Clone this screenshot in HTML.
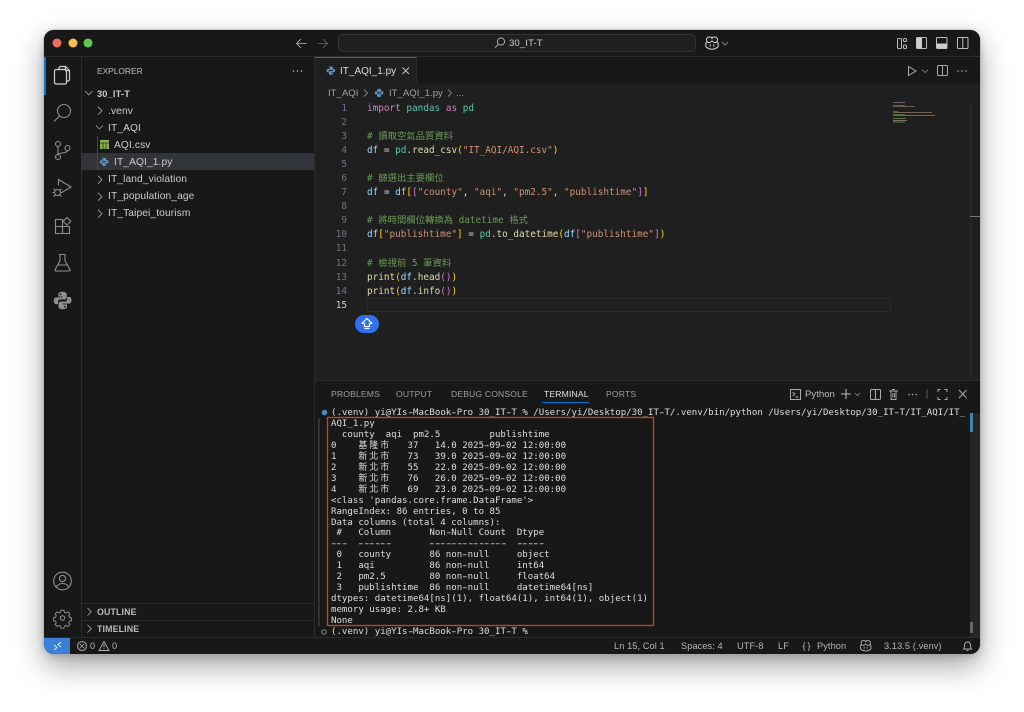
<!DOCTYPE html>
<html lang="zh-Hant">
<head>
<meta charset="utf-8">
<title>30_IT-T</title>
<style>
html,body{margin:0;padding:0;width:1024px;height:712px;overflow:hidden;background:#fff}
*{box-sizing:border-box}
#win{position:absolute;left:44px;top:30px;width:936px;height:624px;border-radius:10px;background:#181818;box-shadow:0 0 0 .5px #aaa,0 12px 30px rgba(0,0,0,.36),0 2px 8px rgba(0,0,0,.18)}
#clip{position:absolute;left:0;top:0;width:1024px;height:712px;clip-path:inset(30px 44px 58px 44px round 10px);filter:blur(.35px)}
.r{position:absolute}
.t{position:absolute;white-space:pre;font-family:"Liberation Sans","Noto Sans CJK TC",sans-serif;color:#ccc;font-size:10px;line-height:14px}
.side{color:#cccccc;font-size:10.2px;letter-spacing:.12px}
.tab{color:#9d9d9d;font-size:8.6px;letter-spacing:.15px}
.st{color:#b5b5b5;font-size:9.2px;letter-spacing:.1px;line-height:14px}
.code{position:absolute;left:367px;top:102px;margin:0;font-family:"DejaVu Sans Mono","Noto Sans CJK TC",monospace;font-size:9.35px;line-height:14.05px;color:#d4d4d4;white-space:pre}
.nums{position:absolute;left:315px;width:32px;top:102px;margin:0;text-align:right;font-family:"DejaVu Sans Mono",monospace;font-size:9.35px;line-height:14.05px;color:#6e7681;white-space:pre}
.k{color:#c586c0}.m{color:#4ec9b0}.c{color:#6a9955}.v{color:#9cdcfe}.s{color:#ce9178}.f{color:#dcdcaa}.y{color:#ffd700}.p{color:#da70d6}
#term{position:absolute;left:331px;top:408px;margin:0;font-family:"DejaVu Sans Mono","Noto Sans CJK TC",monospace;font-size:9.08px;line-height:10.95px;color:#dedede;white-space:pre}
#term b{font-weight:400;font-size:9px;letter-spacing:1.94px;line-height:1px;font-family:"Noto Sans CJK TC",sans-serif}
#term i{font-style:normal;display:inline-block;transform:scaleX(1.6)}
svg{position:absolute;left:0;top:0}
</style>
</head>
<body>
<div id="win"></div>
<div id="clip">
  <!-- base regions -->
  <div class="r" style="left:44px;top:30px;width:936px;height:624px;background:#181818"></div>
  <div class="r" style="left:44px;top:56px;width:936px;height:1px;background:#2b2b2b"></div>
  <div class="r" style="left:81px;top:57px;width:1px;height:581px;background:#2b2b2b"></div>
  <div class="r" style="left:44px;top:57px;width:2px;height:38px;background:#0078d4"></div>
  <div class="r" style="left:315px;top:57px;width:665px;height:323px;background:#1f1f1f"></div>
  <div class="r" style="left:315px;top:57px;width:665px;height:26px;background:#181818"></div>
  <div class="r" style="left:315px;top:57px;width:102px;height:26px;background:#1f1f1f;border-top:1px solid #0078d4;border-right:1px solid #2b2b2b"></div>
  <div class="r" style="left:314px;top:57px;width:1px;height:581px;background:#2b2b2b"></div>
  <div class="r" style="left:315px;top:380px;width:665px;height:1px;background:#2b2b2b"></div>
  <div class="r" style="left:44px;top:637px;width:936px;height:1px;background:#2b2b2b"></div>
  <div class="r" style="left:338px;top:34px;width:358px;height:18px;border-radius:5px;background:#1f1f1f;border:1px solid #333"></div>
  <div class="r" style="left:81px;top:153px;width:233px;height:17px;background:#33333a"></div>
  <div class="r" style="left:97px;top:136px;width:1px;height:34px;background:#454545"></div>
  <div class="r" style="left:82px;top:603px;width:232px;height:1px;background:#2b2b2b"></div>
  <div class="r" style="left:82px;top:620px;width:232px;height:1px;background:#2b2b2b"></div>
  <div class="r" style="left:367px;top:298px;width:524px;height:14px;border:1px solid #282828"></div>
  <div class="r" style="left:970px;top:101px;width:1px;height:279px;background:#2b2b2b"></div>
  <div class="r" style="left:970px;top:216px;width:10px;height:1px;background:#777"></div>
  <div class="r" style="left:970px;top:413px;width:10px;height:224px;background:#262626"></div>
  <div class="r" style="left:970px;top:413px;width:3px;height:19px;background:#3d83b5"></div>
  <div class="r" style="left:970px;top:622px;width:3px;height:11px;background:#666"></div>
  <div class="r" style="left:318px;top:418px;width:2px;height:208px;background:#333"></div>
  <div class="r" style="left:44px;top:638px;width:26px;height:16px;background:#3a7fd9"></div>
  <div class="r" style="left:355px;top:315px;width:24px;height:18px;border-radius:9px;background:#2f71ee"></div>

  <!-- title -->
  <div class="t" style="left:509px;top:37px;font-size:9.6px;color:#ccc;letter-spacing:.1px">30_IT-T</div>

  <!-- sidebar -->
  <div class="t" style="left:97px;top:64px;font-size:8.4px;color:#bbb">EXPLORER</div>
  <div class="t" style="left:97px;top:87px;font-size:9.2px;font-weight:700;color:#ccc;letter-spacing:.2px">30_IT-T</div>
  <div class="t side" style="left:108px;top:105px">.venv</div>
  <div class="t side" style="left:108px;top:122px">IT_AQI</div>
  <div class="t side" style="left:114px;top:139px">AQI.csv</div>
  <div class="t side" style="left:114px;top:156px">IT_AQI_1.py</div>
  <div class="t side" style="left:108px;top:173px">IT_land_violation</div>
  <div class="t side" style="left:108px;top:190px">IT_population_age</div>
  <div class="t side" style="left:108px;top:207px">IT_Taipei_tourism</div>
  <div class="t" style="left:97px;top:605px;font-size:8.8px;font-weight:700;color:#bbb;letter-spacing:.15px">OUTLINE</div>
  <div class="t" style="left:97px;top:622px;font-size:8.8px;font-weight:700;color:#bbb;letter-spacing:.15px">TIMELINE</div>

  <!-- tab + breadcrumb -->
  <div class="t" style="left:340px;top:65px;font-size:10px;color:#ddd">IT_AQI_1.py</div>
  <div class="t" style="left:328px;top:87px;font-size:9.6px;color:#a0a0a0">IT_AQI</div>
  <div class="t" style="left:389px;top:87px;font-size:9.6px;color:#a0a0a0">IT_AQI_1.py</div>
  <div class="t" style="left:456px;top:87px;font-size:9.6px;color:#a0a0a0">...</div>

  <!-- code -->
  <pre class="nums">1
2
3
4
5
6
7
8
9
10
11
12
13
14
<span style="color:#ccc">15</span></pre>
  <pre class="code"><span class="k">import</span> <span class="m">pandas</span> <span class="k">as</span> <span class="m">pd</span>

<span class="c"># 讀取空氣品質資料</span>
<span class="v">df</span> = <span class="m">pd</span>.<span class="f">read_csv</span><span class="y">(</span><span class="s">"IT_AQI/AQI.csv"</span><span class="y">)</span>

<span class="c"># 篩選出主要欄位</span>
<span class="v">df</span> = <span class="v">df</span><span class="y">[</span><span class="p">[</span><span class="s">"county"</span>, <span class="s">"aqi"</span>, <span class="s">"pm2.5"</span>, <span class="s">"publishtime"</span><span class="p">]</span><span class="y">]</span>

<span class="c"># 將時間欄位轉換為 datetime 格式</span>
<span class="v">df</span><span class="y">[</span><span class="s">"publishtime"</span><span class="y">]</span> = <span class="m">pd</span>.<span class="f">to_datetime</span><span class="y">(</span><span class="v">df</span><span class="p">[</span><span class="s">"publishtime"</span><span class="p">]</span><span class="y">)</span>

<span class="c"># 檢視前 5 筆資料</span>
<span class="f">print</span><span class="y">(</span><span class="v">df</span>.<span class="f">head</span><span class="p">()</span><span class="y">)</span>
<span class="f">print</span><span class="y">(</span><span class="v">df</span>.<span class="f">info</span><span class="p">()</span><span class="y">)</span></pre>

  <!-- panel tabs -->
  <div class="t tab" style="left:331px;top:387px">PROBLEMS</div>
  <div class="t tab" style="left:396px;top:387px">OUTPUT</div>
  <div class="t tab" style="left:451px;top:387px">DEBUG CONSOLE</div>
  <div class="t tab" style="left:544px;top:387px;color:#e0e0e0">TERMINAL</div>
  <div class="t tab" style="left:606px;top:387px">PORTS</div>
  <div class="r" style="left:542px;top:402px;width:47px;height:1px;background:#0078d4"></div>
  <div class="t" style="left:805px;top:388px;font-size:9.6px;color:#bbb">Python</div>

  <!-- terminal -->
  <pre id="term">(.venv) yi@YIs<i>-</i>MacBook<i>-</i>Pro 30_IT<i>-</i>T % /Users/yi/Desktop/30_IT<i>-</i>T/.venv/bin/python /Users/yi/Desktop/30_IT<i>-</i>T/IT_AQI/IT_
AQI_1.py
  county  aqi  pm2.5         publishtime
0    <b>基隆市</b>   37   14.0 2025<i>-</i>09<i>-</i>02 12:00:00
1    <b>新北市</b>   73   39.0 2025<i>-</i>09<i>-</i>02 12:00:00
2    <b>新北市</b>   55   22.0 2025<i>-</i>09<i>-</i>02 12:00:00
3    <b>新北市</b>   76   26.0 2025<i>-</i>09<i>-</i>02 12:00:00
4    <b>新北市</b>   69   23.0 2025<i>-</i>09<i>-</i>02 12:00:00
&lt;class 'pandas.core.frame.DataFrame'&gt;
RangeIndex: 86 entries, 0 to 85
Data columns (total 4 columns):
 #   Column       Non<i>-</i>Null Count  Dtype
<i>-</i><i>-</i><i>-</i>  <i>-</i><i>-</i><i>-</i><i>-</i><i>-</i><i>-</i>       <i>-</i><i>-</i><i>-</i><i>-</i><i>-</i><i>-</i><i>-</i><i>-</i><i>-</i><i>-</i><i>-</i><i>-</i><i>-</i><i>-</i>  <i>-</i><i>-</i><i>-</i><i>-</i><i>-</i>
 0   county       86 non<i>-</i>null     object
 1   aqi          86 non<i>-</i>null     int64
 2   pm2.5        80 non<i>-</i>null     float64
 3   publishtime  86 non<i>-</i>null     datetime64[ns]
dtypes: datetime64[ns](1), float64(1), int64(1), object(1)
memory usage: 2.8+ KB
None
(.venv) yi@YIs<i>-</i>MacBook<i>-</i>Pro 30_IT<i>-</i>T %</pre>

  <!-- status -->
  <div class="t st" style="left:90px;top:639px">0</div>
  <div class="t st" style="left:112px;top:639px">0</div>
  <div class="t st" style="left:614px;top:639px">Ln 15, Col 1</div>
  <div class="t st" style="left:681px;top:639px">Spaces: 4</div>
  <div class="t st" style="left:737px;top:639px">UTF-8</div>
  <div class="t st" style="left:778px;top:639px">LF</div>
  <div class="t st" style="left:817px;top:639px">Python</div>
  <div class="t st" style="left:884px;top:639px">3.13.5 (.venv)</div>

  <svg width="1024" height="712" viewBox="0 0 1024 712" fill="none">
    <defs>
      <g id="pylogo">
        <path fill-rule="evenodd" d="M8 1C5.200 1 4.600 2.100 4.600 3.200V4.900H8.200V5.500H3C1.700 5.500 1 6.700 1 8.200S1.700 10.900 3 10.900H4.400V9.200C4.400 8 5.400 7.100 6.500 7.100H9.700C10.700 7.100 11.400 6.300 11.400 5.400V3.200C11.400 2 10.500 1 8 1ZM6.300 2.300a.7.7 0 1 0 .01 0z"/>
        <path fill-rule="evenodd" transform="rotate(180 8.100 8)" d="M8 1C5.200 1 4.600 2.100 4.600 3.200V4.900H8.200V5.500H3C1.700 5.500 1 6.700 1 8.200S1.700 10.900 3 10.900H4.400V9.200C4.400 8 5.400 7.100 6.500 7.100H9.700C10.700 7.100 11.400 6.300 11.400 5.400V3.200C11.400 2 10.500 1 8 1ZM6.300 2.300a.7.7 0 1 0 .01 0z"/>
      </g>
      <g id="copilot" stroke-linejoin="round">
        <path d="M707 41.800c-.9-2.200-.8-4.800 2.500-4.800 1.500 0 2.500.6 2.500 1.800 0-1.200 1-1.800 2.500-1.800 3.300 0 3.400 2.600 2.500 4.800"/>
        <path d="M705.800 44.200c0-1.500.5-2.200 1.200-2.400 1.500 1.400 3.600.9 5-.9 1.400 1.800 3.500 2.300 5 .9.700.2 1.200.9 1.200 2.400v2.300c-1.500 1.800-3.600 2.700-6.200 2.700s-4.700-.9-6.200-2.700z"/>
        <path d="M710.200 44.300v2.200M713.800 44.300v2.200"/>
      </g>
    </defs>
    <!-- terminal highlight box -->
    <rect x="327.500" y="417.500" width="326" height="208" stroke="#d0401c" stroke-width="1.300"/>
    <!-- traffic lights -->
    <circle cx="57" cy="43" r="4.500" fill="#ed6a5e"/>
    <circle cx="73" cy="43" r="4.500" fill="#f4bf4f"/>
    <circle cx="88" cy="43" r="4.500" fill="#61c554"/>
    <!-- nav arrows -->
    <path d="M306.500 43.500H297M301 39L296.500 43.500L301 48" stroke="#bbb" stroke-width=".8"/>
    <path d="M317.500 43.500H327M323 39L327.500 43.500L323 48" stroke="#666" stroke-width=".8"/>
    <!-- title search -->
    <circle cx="501" cy="41.500" r="3.600" stroke="#bbb" stroke-width=".9"/>
    <path d="M498.400 44.200L495 47.700" stroke="#bbb" stroke-width=".9"/>
    <!-- copilot top -->
    <use href="#copilot" stroke="#d0d0d0" stroke-width="1"/>
    <path d="M722 42l3 3 3-3" stroke="#999" stroke-width=".8"/>
    <!-- layout icons -->
    <g stroke="#bbb">
      <rect x="897.500" y="38.500" width="4" height="10" rx="1"/>
      <rect x="903.500" y="38.500" width="3" height="3" rx="1"/>
      <rect x="903.500" y="45" width="3" height="3.500" rx="1"/>
      <rect x="916.500" y="37.500" width="10" height="11" rx="1"/>
      <rect x="936.500" y="37.500" width="10.500" height="11" rx="1"/>
      <rect x="957.500" y="37.500" width="10.500" height="11" rx="1"/>
      <path d="M962.800 37.500V48.500"/>
    </g>
    <rect x="916.500" y="37.500" width="5.500" height="11" fill="#ccc"/>
    <rect x="936.500" y="43.500" width="10.500" height="5" fill="#ccc"/>
    <!-- run / split / more -->
    <path d="M908.500 66.500L916 71L908.500 75.500Z" stroke="#aaa"/>
    <path d="M922 69.500l3 3 3-3" stroke="#888" stroke-width=".8"/>
    <rect x="937.500" y="65.500" width="10" height="10" rx="1" stroke="#aaa"/>
    <path d="M942.500 65.500v10" stroke="#aaa"/>
    <g fill="#aaa"><circle cx="958" cy="71" r=".8"/><circle cx="962" cy="71" r=".8"/><circle cx="966" cy="71" r=".8"/></g>
    <!-- explorer dots -->
    <g fill="#bbb"><circle cx="293.500" cy="71" r=".8"/><circle cx="297.500" cy="71" r=".8"/><circle cx="301.500" cy="71" r=".8"/></g>
    <!-- tree chevrons -->
    <g stroke="#aaa" stroke-width=".75">
      <path d="M85 91l3.800 3.800 3.800-3.800"/>
      <path d="M98 106.700l4 4-4 4"/>
      <path d="M96 125.500l3.500 3.500 3.500-3.500"/>
      <path d="M98 175.700l4 4-4 4"/>
      <path d="M98 192.700l4 4-4 4"/>
      <path d="M98 209.700l4 4-4 4"/>
      <path d="M87.500 608l3.800 3.800-3.800 3.800"/>
      <path d="M87.500 625l3.800 3.800-3.800 3.800"/>
    </g>
    <!-- csv icon -->
    <rect x="100" y="140" width="9" height="9" fill="#8bb04f"/>
    <path d="M100 143h9M103 143v6M106 143v6" stroke="#2a3518" stroke-width=".8"/>
    <!-- python file icons -->
    <use href="#pylogo" fill="#5a9bc9" transform="translate(99.300 157.100) scale(.6)"/>
    <use href="#pylogo" fill="#5a9bc9" transform="translate(326 65.800) scale(.6)"/>
    <use href="#pylogo" fill="#5a9bc9" transform="translate(374.300 88.100) scale(.6)"/>
    <!-- tab close -->
    <path d="M402.500 67.500l6.500 6.500M409 67.500l-6.500 6.500" stroke="#ccc" stroke-width=".9"/>
    <!-- breadcrumb chevrons -->
    <path d="M364 89.500l3.500 3.500-3.500 3.500M448 89.500l3.500 3.500-3.500 3.500" stroke="#999" stroke-width=".8"/>
    <!-- minimap -->
    <g stroke-width="1" opacity=".6">
      <path d="M893 102.500h12" stroke="#a98fb0"/>
      <path d="M893 105.500h3M896 105.500h9" stroke="#6a9955"/>
      <path d="M893 106.500h6M899 106.500h16" stroke="#9a8a70"/>
      <path d="M893 111.500h5" stroke="#6a9955"/>
      <path d="M893 112.500h10M903 112.500h29" stroke="#b58a70"/>
      <path d="M893 114.500h12" stroke="#6a9955"/>
      <path d="M893 115.500h42" stroke="#b09a80"/>
      <path d="M893 118.500h13" stroke="#8ea57a"/>
      <path d="M893 120.500h14" stroke="#b0b080"/>
      <path d="M893 122h12" stroke="#b0b080"/>
    </g>
    <!-- upload button arrow -->
    <path d="M367 318.500l5 4.800h-2.500v3.200h-5v-3.200H362z" stroke="#fff" stroke-width="1.200" stroke-linejoin="round"/>
    <path d="M364.500 328.500h5" stroke="#fff" stroke-width="1.200"/>
    <!-- activity bar -->
    <g stroke="#8f8f8f" stroke-width="1.100">
      <g stroke="#d0d0d0" stroke-width="1.200">
        <path d="M59 69.500v-1.500a1.500 1.500 0 0 1 1.500-1.500h5l4 4v9a1.500 1.500 0 0 1-1.500 1.500h-1.500"/>
        <rect x="54.500" y="69.500" width="12" height="14.500" rx="1.500"/>
        <path d="M65.500 66.500v4h4"/>
      </g>
      <circle cx="64" cy="111" r="6.500"/>
      <path d="M59.500 116L54 121.500"/>
      <circle cx="58" cy="144" r="2.500"/>
      <circle cx="58" cy="157" r="2.500"/>
      <circle cx="67.500" cy="148" r="2.500"/>
      <path d="M58 146.500v8M67.500 150.500c0 3-9.500 2-9.500 4"/>
      <path d="M58.500 185.500V179.500L71 187L62 192.300"/>
      <circle cx="57.500" cy="192.500" r="3"/>
      <path d="M53.500 189l2 1.500M61.500 189l-2 1.500M52.500 192.500h2M60.500 192.500h2M53.500 196.500l2-1.500M61.500 196.500l-2-1.500"/>
      <path d="M55.500 219.500h7v7h7v7h-14zM55.500 226.500h7v7"/>
      <path d="M67 217.500l3.800 3.800-3.800 3.800-3.800-3.800z"/>
      <path d="M59 254.500h6.500M60 254.500v6l-4.800 9a.9.9 0 0 0 .8 1.500h13a.9.9 0 0 0 .8-1.500l-4.800-9v-6M57.500 265h10"/>
      <circle cx="62.500" cy="581" r="8.800"/>
      <circle cx="62.500" cy="578.500" r="3.100"/>
      <path d="M56 587.500c1.500-3 3.500-4 6.500-4s5 1 6.500 4"/>
      <circle cx="62.500" cy="618" r="2.200"/>
      <path d="M60.800 609.500h3.400l.5 2.300 1.800.8 2-1.300 2.400 2.400-1.300 2 .8 1.800 2.300.5v3.400l-2.300.5-.8 1.800 1.300 2-2.400 2.400-2-1.300-1.800.8-.5 2.300h-3.400l-.5-2.300-1.800-.8-2 1.300-2.400-2.400 1.300-2-.8-1.800-2.300-.5v-3.400l2.300-.5.8-1.800-1.300-2 2.400-2.400 2 1.300 1.800-.8z" transform="translate(62.500 618.600) scale(.88) translate(-62.500 -619)"/>
    </g>
    <!-- activity python -->
    <use href="#pylogo" fill="#8f8f8f" transform="translate(52.500 290.500) scale(1.250)"/>
    <!-- terminal toolbar -->
    <rect x="790.500" y="389.500" width="10" height="10" stroke="#aaa"/>
    <path d="M792.500 392l2.500 2-2.500 2M795.500 397h3" stroke="#aaa" stroke-width=".9"/>
    <path d="M846 389v10M841 394h10" stroke="#bbb"/>
    <path d="M855 393l2.500 2.500 2.500-2.500" stroke="#888" stroke-width=".8"/>
    <rect x="870.500" y="389.500" width="10" height="10" rx="1" stroke="#aaa"/>
    <path d="M875.500 389.500v10" stroke="#aaa"/>
    <path d="M889 391h9M891 391v8.500h5V391M892 389.500h3M892.800 393v4.500M894.500 393v4.500" stroke="#aaa" stroke-width=".9"/>
    <g fill="#aaa"><circle cx="909" cy="394.500" r=".8"/><circle cx="912.500" cy="394.500" r=".8"/><circle cx="916" cy="394.500" r=".8"/></g>
    <path d="M927 389v10" stroke="#555"/>
    <path d="M938 392v-2.500h2.500M944.500 389.500h2.500v2.500M947 397v2.500h-2.500M940.500 399.500H938V397" stroke="#aaa"/>
    <path d="M959 390l7.500 8M966.500 390l-7.500 8" stroke="#aaa"/>
    <!-- terminal decorations -->
    <circle cx="324.500" cy="412.500" r="2.800" fill="#3d8fc4"/>
    <circle cx="324" cy="632" r="2.200" stroke="#888"/>
    <!-- status icons -->
    <path d="M54 645l3 2.500-3 2.500M61 642l-3 2.500 3 2.500" stroke="#e8f0fb" stroke-width=".9"/>
    <circle cx="82" cy="646" r="4.400" stroke="#b5b5b5"/>
    <path d="M80 644l4 4M84 644l-4 4" stroke="#b5b5b5" stroke-width=".8"/>
    <path d="M104 641.500l5 9h-10zM104 644.500v3M104 648.500v.8" stroke="#b5b5b5" stroke-width=".9"/>
    <path d="M805 642.500c-1.500.5-1 2-1 3s-.5 1-1.500 1c1 0 1.500 0 1.500 1s-.5 2.500 1 3M808 642.500c1.500.5 1 2 1 3s.5 1 1.500 1c-1 0-1.500 0-1.500 1s.5 2.500-1 3" stroke="#b5b5b5" stroke-width=".8"/>
    <use href="#copilot" stroke="#b5b5b5" stroke-width="1" transform="translate(865.700 645.700) scale(.85) translate(-712 -43)"/>
    <path d="M963.500 649c1-1 1-2 1-4a3 3 0 0 1 6 0c0 2 0 3 1 4zM966.500 650.500h2" stroke="#b5b5b5" stroke-width=".9"/>
  </svg>
</div>
</body>
</html>
